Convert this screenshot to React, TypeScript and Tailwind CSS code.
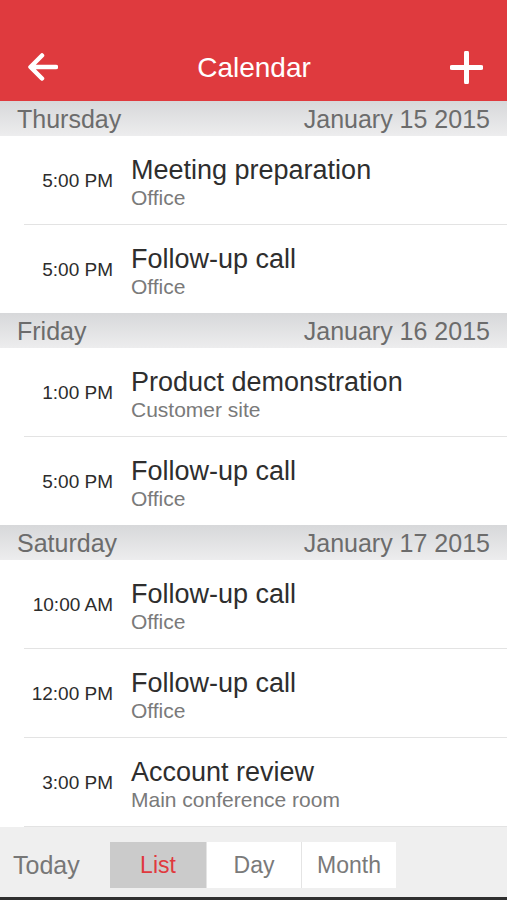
import { Fragment } from "react";

interface CalEvent {
  time: string;
  title: string;
  place: string;
}

interface CalDay {
  weekday: string;
  date: string;
  events: CalEvent[];
}

const days: CalDay[] = [
  {
    weekday: "Thursday",
    date: "January 15 2015",
    events: [
      { time: "5:00 PM", title: "Meeting preparation", place: "Office" },
      { time: "5:00 PM", title: "Follow-up call", place: "Office" },
    ],
  },
  {
    weekday: "Friday",
    date: "January 16 2015",
    events: [
      { time: "1:00 PM", title: "Product demonstration", place: "Customer site" },
      { time: "5:00 PM", title: "Follow-up call", place: "Office" },
    ],
  },
  {
    weekday: "Saturday",
    date: "January 17 2015",
    events: [
      { time: "10:00 AM", title: "Follow-up call", place: "Office" },
      { time: "12:00 PM", title: "Follow-up call", place: "Office" },
      { time: "3:00 PM", title: "Account review", place: "Main conference room" },
    ],
  },
];

const EventRow = ({ ev, divider }: { ev: CalEvent; divider: boolean }) => (
  <div>
    <div className="flex h-[88px] items-start">
      <div className="w-[113px] pt-[34px] text-right text-[19px] leading-[22px] text-[#2c2c2c]">
        {ev.time}
      </div>
      <div className="ml-[18px] pt-[20px]">
        <div className="text-[27px] leading-[28px] text-[#2e2e2e]">{ev.title}</div>
        <div className="mt-[3px] text-[21px] leading-[22px] text-[#7a7a7a]">{ev.place}</div>
      </div>
    </div>
    {divider && <div className="ml-[24px] h-px bg-[#e3e3e3]" />}
  </div>
);

const App = () => {
  return (
    <div className="w-[507px] h-[900px] overflow-hidden bg-white font-['Liberation_Sans',Arial,sans-serif] flex flex-col">
      {/* Top bar */}
      <div className="h-[102px] bg-[#df3a3e] flex items-end pb-[17px] px-[27px] justify-between">
        <svg width="31" height="28" viewBox="0 0 31 28" className="mb-[3px]">
          <path
            d="M29 14H4M15 2.5L3.5 14 15 25.5"
            fill="none"
            stroke="white"
            strokeWidth="4.5"
            strokeLinecap="round"
            strokeLinejoin="round"
          />
        </svg>
        <div className="text-[28px] leading-[32px] text-white">Calendar</div>
        <svg width="33" height="33" viewBox="0 0 33 33" className="mr-[-3px]">
          <path d="M16.5 2v29M2 16.5h29" fill="none" stroke="white" strokeWidth="5" strokeLinecap="round" />
        </svg>
      </div>

      {/* List */}
      <div className="flex-1">
        {days.map((day) => (
          <Fragment key={day.weekday}>
            <div className="h-[35px] bg-linear-to-b from-[#d7d8da] to-[#ededee] flex justify-between px-[17px] pt-[1px] text-[25px] leading-[35px] text-[#6c6c6c]">
              <span>{day.weekday}</span>
              <span>{day.date}</span>
            </div>
            {day.events.map((ev, i) => (
              <EventRow
                key={i}
                ev={ev}
                divider={i < day.events.length - 1 || day.weekday === "Saturday"}
              />
            ))}
          </Fragment>
        ))}
      </div>

      {/* Bottom bar */}
      <div className="h-[70px] bg-[#efefef] flex items-start pt-[15px] pl-[13px]">
        <div className="w-[97px] h-[46px] flex items-center text-[25px] text-[#777]">Today</div>
        <div className="flex gap-px bg-[#e4e4e4]">
          <div className="w-[96px] h-[46px] bg-[#cbcbcb] flex items-center justify-center text-[23px] text-[#e0393e]">
            List
          </div>
          <div className="w-[94px] h-[46px] bg-white flex items-center justify-center text-[23px] text-[#7a7a7a]">
            Day
          </div>
          <div className="w-[94px] h-[46px] bg-white flex items-center justify-center text-[23px] text-[#7a7a7a]">
            Month
          </div>
        </div>
      </div>
      <div className="h-[3px] bg-[#2f2f2f]" />
    </div>
  );
};

export default App;
